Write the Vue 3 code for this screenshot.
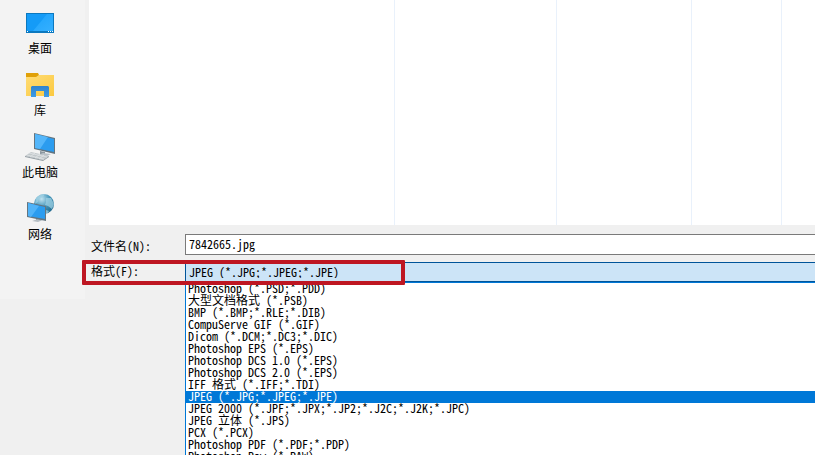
<script setup>
import { ref } from 'vue'

const fileName = ref('7842665.jpg')
const places = [
  { id: 'desktop', label: '桌面' },
  { id: 'library', label: '库' },
  { id: 'computer', label: '此电脑' },
  { id: 'network', label: '网络' },
]
const formats = [
  'Photoshop (*.PSD;*.PDD)',
  '大型文档格式 (*.PSB)',
  'BMP (*.BMP;*.RLE;*.DIB)',
  'CompuServe GIF (*.GIF)',
  'Dicom (*.DCM;*.DC3;*.DIC)',
  'Photoshop EPS (*.EPS)',
  'Photoshop DCS 1.0 (*.EPS)',
  'Photoshop DCS 2.0 (*.EPS)',
  'IFF 格式 (*.IFF;*.TDI)',
  'JPEG (*.JPG;*.JPEG;*.JPE)',
  'JPEG 2000 (*.JPF;*.JPX;*.JP2;*.J2C;*.J2K;*.JPC)',
  'JPEG 立体 (*.JPS)',
  'PCX (*.PCX)',
  'Photoshop PDF (*.PDF;*.PDP)',
  'Photoshop Raw (*.RAW)',
]
const format = ref(formats[9])
</script>

<template>
  <div class="dialog">
    <nav class="places">
      <button v-for="p in places" :key="p.id" type="button" class="place">
        <svg v-if="p.id === 'desktop'" class="icon" viewBox="0 0 32 32" aria-hidden="true">
          <defs>
            <linearGradient id="desk" x1="0" y1="0" x2="1" y2="1">
              <stop offset="0" stop-color="#18a0fb" />
              <stop offset="1" stop-color="#35b0ff" />
            </linearGradient>
          </defs>
          <rect x="2" y="6" width="28" height="20" fill="#0b78bf" />
          <rect x="3" y="7" width="26" height="17" fill="url(#desk)" />
          <path d="M3 24V7h20L9 24z" fill="#149bf7" />
          <path d="M3 25h1v-1H3zM24 25h1v-1h-1zM26 25h1v-1h-1zM28 25h1v-1h-1z" fill="#fff" />
        </svg>
        <svg v-else-if="p.id === 'library'" class="icon" viewBox="0 0 32 32" aria-hidden="true">
          <defs>
            <linearGradient id="fold" x1="0" y1="0" x2="1" y2="1">
              <stop offset="0" stop-color="#ffdc75" />
              <stop offset="1" stop-color="#fbc940" />
            </linearGradient>
            <linearGradient id="stand" x1="0" y1="0" x2="0" y2="1">
              <stop offset="0" stop-color="#2f83cd" />
              <stop offset="1" stop-color="#3e9ce6" />
            </linearGradient>
          </defs>
          <path d="M2 4h12l1 2-1 3H2z" fill="#e0a008" />
          <path d="M2 8h10l3-2h15v21H2z" fill="url(#fold)" />
          <path d="M7 28V18l1-1h16l1 1v10h-5v-6h-8v6z" fill="url(#stand)" />
        </svg>
        <svg v-else-if="p.id === 'computer'" class="icon" viewBox="0 0 32 32" aria-hidden="true">
          <path d="M16 20l5 1v3l-5-1z" fill="#8b979f" />
          <path d="M14 24l5-2 8 1-4 2z" fill="#b8c1c7" />
          <path d="M10 2l21 5v16L10 18z" fill="#647580" />
          <path d="M11 3l19 5v13L11 17z" fill="#2b9cef" />
          <path d="M11 3l13 3-8 12-5-1z" fill="#54b6fa" />
          <path d="M7 21l18 4-6 4L1 25z" fill="#c2c8cb" />
          <path d="M1 25l18 4 6-4v1l-6 4L1 26z" fill="#929ca2" />
          <path d="M5 22l18 4M3 24l17 4M6 26l5-4M11 27l5-4M15 28l5-4" stroke="#e9ecee" stroke-width=".6" />
        </svg>
        <svg v-else class="icon" viewBox="0 0 32 32" aria-hidden="true">
          <defs>
            <radialGradient id="globe" cx=".38" cy=".25" r=".8">
              <stop offset="0" stop-color="#c0e2f0" />
              <stop offset=".5" stop-color="#4697bb" />
              <stop offset="1" stop-color="#1e6589" />
            </radialGradient>
          </defs>
          <circle cx="20" cy="11" r="10" fill="url(#globe)" />
          <path d="M12 5q4-4 9-4l-2 3-4 1-1 4-3 2zM22 5l5 0 3 6-2 5-4-3-3-1 1-3zM22 17l3 1-2 3h-2z" fill="#9fd0e3" opacity=".75" />
          <path d="M12 25l5 1v2l-5-1z" fill="#8b979f" />
          <path d="M8 28l6-2 5 1-5 2z" fill="#b4bdc3" />
          <path d="M3 9l19 4v15L3 24z" fill="#647580" />
          <path d="M4 10l17 4v12L4 23z" fill="#2b9cef" />
          <path d="M4 10l11 3-8 11-3-1z" fill="#50b3f8" />
        </svg>
        <span class="place-name">{{ p.label }}</span>
      </button>
    </nav>

    <main class="body">
      <div class="files">
        <div v-for="n in 5" :key="n" class="column"></div>
      </div>
      <form class="fields" @submit.prevent>
        <label class="label name-label" for="file-name">文件名(N):</label>
        <input id="file-name" v-model="fileName" class="name" type="text" />
        <label class="label" for="format">格式(F):</label>
        <div class="combo">
          <select id="format" v-model="format" class="format">
            <option v-for="f in formats" :key="f">{{ f }}</option>
          </select>
          <ul class="list" role="listbox" aria-label="格式">
            <li
              v-for="f in formats"
              :key="f"
              role="option"
              :aria-selected="f === format"
              :class="['option', { selected: f === format }]"
              @click="format = f"
            >{{ f }}</li>
          </ul>
        </div>
        <div class="marker"></div>
      </form>
    </main>
  </div>
</template>

<style>
body {
  margin: 0;
  overflow: hidden;
  background: #f0f0f0;
}
</style>

<style scoped>
.dialog {
  display: grid;
  grid-template-columns: 85px 1fr;
  column-gap: 4px;
  align-items: start;
  height: 100vh;
  overflow: hidden;
  background: #f0f0f0;
  color: #000;
  font: 12px/12px "Noto Sans CJK SC", sans-serif;
}
.places {
  display: flex;
  flex-direction: column;
  padding: 0 5px 51px 0;
  background: #f3f3f3;
}
.place {
  display: flex;
  flex-direction: column;
  align-items: center;
  gap: 1px;
  height: 62px;
  padding: 7px 0 0;
  border: 0;
  background: none;
  color: inherit;
  font: inherit;
}
.icon {
  width: 32px;
  height: 32px;
  flex: none;
}
.place-name {
  line-height: 16px;
}
.body {
  min-width: 0;
}
.files {
  display: grid;
  grid-template-columns: 306px 162px 135px 90px 1fr;
  height: 225px;
  background: #fff;
}
.column {
  border-right: 1px solid #e9f1fb;
}
.column:last-child {
  border-right: 0;
}
.fields {
  position: relative;
  display: grid;
  grid-template-columns: 96px 1fr;
  row-gap: 7px;
  padding-top: 9px;
  font-feature-settings: "hwid";
}
.label {
  align-self: start;
  padding: 0 2px;
  line-height: 18px;
}
.name-label {
  align-self: end;
}
.name,
.format {
  box-sizing: border-box;
  display: block;
  width: 100%;
  height: 21px;
  margin: 0;
  padding: 0 3px;
  border: 1px solid #7a7a7a;
  border-right: 0;
  border-radius: 0;
  outline: 0;
  background: #fff;
  color: #000;
  font: inherit;
  font-feature-settings: inherit;
}
.name {
  padding-bottom: 2px;
}
.format {
  appearance: none;
  height: 20px;
  border-color: #005499;
  background: #cce4f7;
}
.list {
  margin: 0;
  padding: 0;
  border: 1px solid #0078d7;
  border-right: 0;
  background: #fff;
  list-style: none;
}
.option {
  height: 12px;
  padding: 0 2px;
  line-height: 10px;
  white-space: nowrap;
}
.selected {
  background: #0078d7;
  color: #fff;
}
.marker {
  position: absolute;
  top: 35px;
  left: -7px;
  box-sizing: border-box;
  width: 323px;
  height: 25px;
  border: 4px solid #be1622;
  border-radius: 1px;
  pointer-events: none;
}
</style>
